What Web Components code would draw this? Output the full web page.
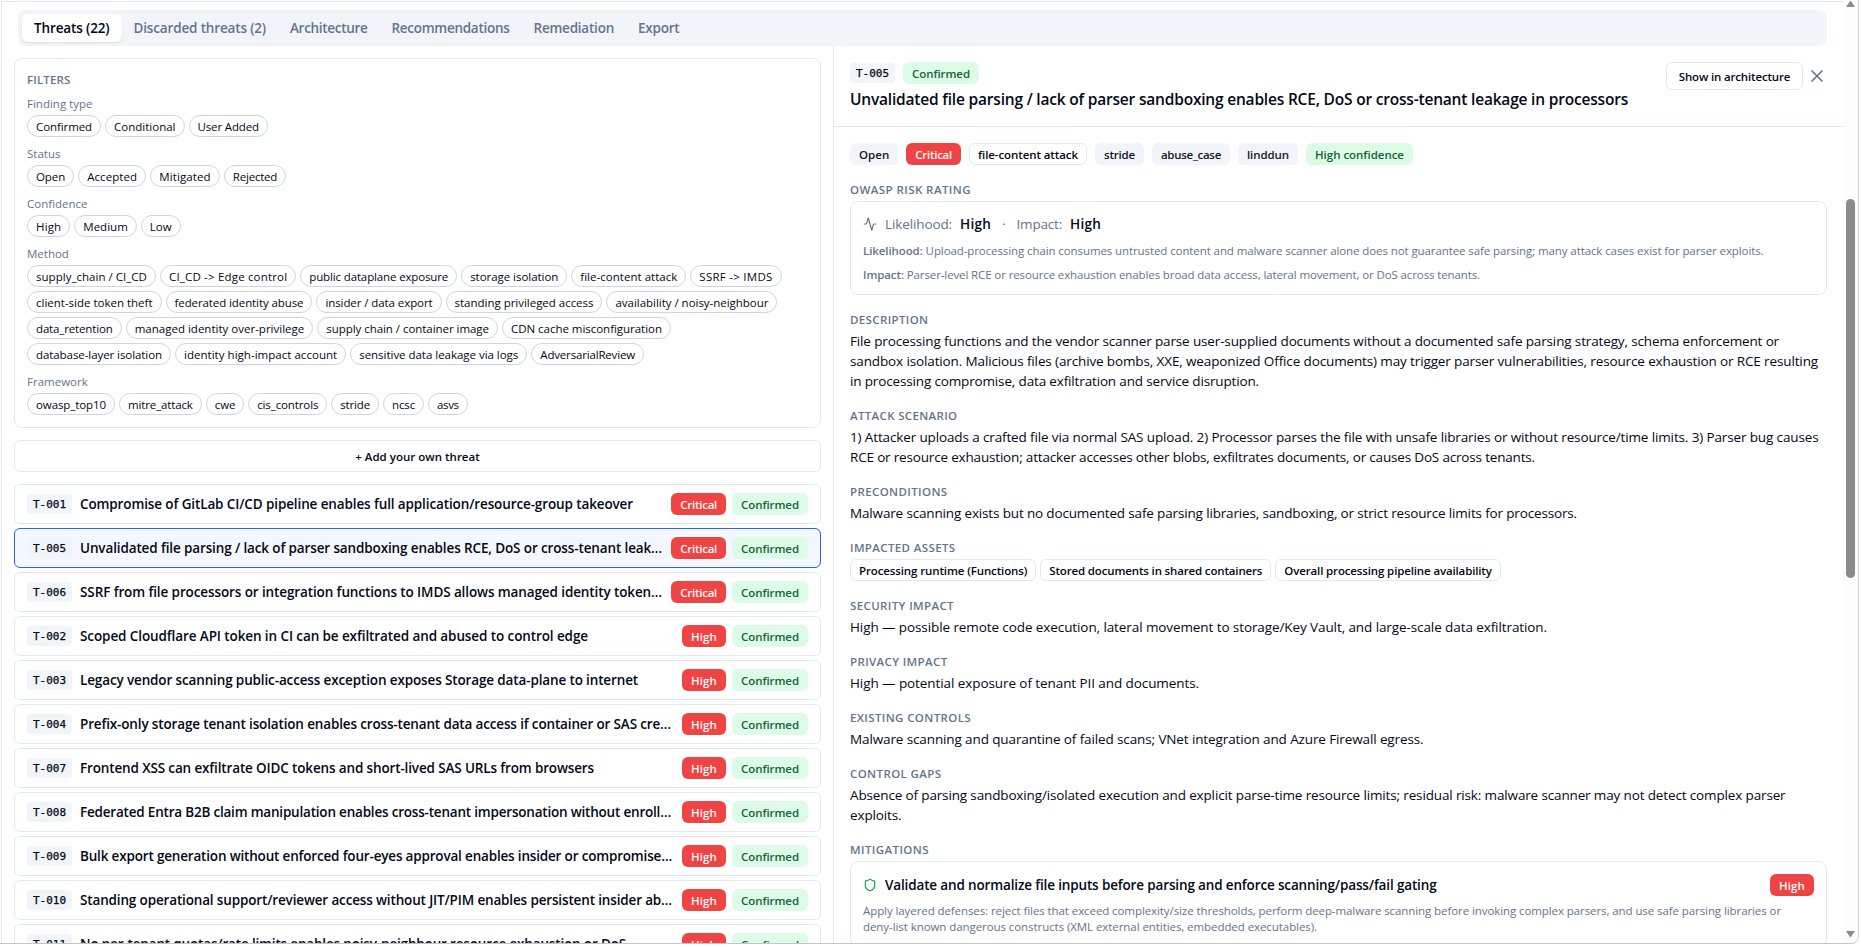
<!DOCTYPE html>
<html lang="en">
<head>
<meta charset="utf-8">
<title>Threat model</title>
<style>
  html, body { height: 100%; }
  body {
    margin: 0;
    overflow: hidden;
    background: #fff;
    color: #020817;
    font-family: "Open Sans", "Noto Sans", sans-serif;
    font-size: 13.5px;
    line-height: 20px;
  }
</style>
</head>
<body>
<threat-app></threat-app>

<script>
  const threats = [
    ['T-001', 'Compromise of GitLab CI/CD pipeline enables full application/resource-group takeover', 'Critical', 553],
    ['T-005', 'Unvalidated file parsing / lack of parser sandboxing enables RCE, DoS or cross-tenant leak…', 'Critical', 582],
    ['T-006', 'SSRF from file processors or integration functions to IMDS allows managed identity token…', 'Critical', 582],
    ['T-002', 'Scoped Cloudflare API token in CI can be exfiltrated and abused to control edge', 'High', 508],
    ['T-003', 'Legacy vendor scanning public-access exception exposes Storage data-plane to internet', 'High', 558],
    ['T-004', 'Prefix-only storage tenant isolation enables cross-tenant data access if container or SAS cre…', 'High', 591],
    ['T-007', 'Frontend XSS can exfiltrate OIDC tokens and short-lived SAS URLs from browsers', 'High', 514],
    ['T-008', 'Federated Entra B2B claim manipulation enables cross-tenant impersonation without enroll…', 'High', 591],
    ['T-009', 'Bulk export generation without enforced four-eyes approval enables insider or compromise…', 'High', 592],
    ['T-010', 'Standing operational support/reviewer access without JIT/PIM enables persistent insider ab…', 'High', 592],
    ['T-011', 'No per-tenant quotas/rate limits enables noisy-neighbour resource exhaustion or DoS', 'High', 546]
  ];

  const filters = [
    ['Finding type', [['Confirmed', 74], ['Conditional', 79.5], ['User Added', 79.5]]],
    ['Status', [['Open', 47.2], ['Accepted', 68], ['Mitigated', 69.6], ['Rejected', 62.4]]],
    ['Confidence', [['High', 43.3], ['Medium', 62.5], ['Low', 40]]],
    ['Method', [
      ['supply_chain / CI_CD', 129], ['CI_CD -> Edge control', 136.3], ['public dataplane exposure', 156.9],
      ['storage isolation', 106.1], ['file-content attack', 115.1], ['SSRF -> IMDS', 91.2],
      ['client-side token theft', 134.5], ['federated identity abuse', 146.9], ['insider / data export', 125.2],
      ['standing privileged access', 156.9], ['availability / noisy-neighbour', 171],
      ['data_retention', 94.7], ['managed identity over-privilege', 187.6], ['supply chain / container image', 180.7],
      ['CDN cache misconfiguration', 169],
      ['database-layer isolation', 144], ['identity high-impact account', 171.2],
      ['sensitive data leakage via logs', 177.1], ['AdversarialReview', 112.7]
    ]],
    ['Framework', [
      ['owasp_top10', 88], ['mitre_attack', 82.8], ['cwe', 38.4], ['cis_controls', 79.1],
      ['stride', 47.8], ['ncsc', 41], ['asvs', 39.5]
    ]]
  ];

  const esc = text => text.replace(/&/g, '&amp;').replace(/</g, '&lt;').replace(/>/g, '&gt;');

  // Text set to a given width by adjusting its tracking
  class FitText extends HTMLElement {
    constructor() {
      super();
      this.attachShadow({ mode: 'open' });
      this.shadowRoot.innerHTML = `
        <style>
          :host { display: inline-block; white-space: nowrap; }
          :host([line]) { display: block; width: max-content; }
        </style>
        <slot></slot>
      `;
    }

    connectedCallback() {
      const target = parseFloat(this.getAttribute('w'));
      if (!target) return;
      const natural = this.getBoundingClientRect().width;
      this.style.letterSpacing = `${(target - natural) / this.textContent.length}px`;
    }
  }

  class FilterChip extends HTMLElement {
    constructor() {
      super();
      this.attachShadow({ mode: 'open' });
    }

    connectedCallback() {
      const w = parseFloat(this.getAttribute('w'));
      this.shadowRoot.innerHTML = `
        <style>
          :host {
            box-sizing: border-box;
            display: flex;
            justify-content: center;
            width: ${w}px;
            height: 22px;
            padding: 2px 0;
            border: 1px solid #d1d5db;
            border-radius: 11px;
            font-size: 11.5px;
            line-height: 17px;
          }
        </style>
        <fit-text w="${w - 18}">${esc(this.getAttribute('label'))}</fit-text>
      `;
    }
  }

  class FilterPanel extends HTMLElement {
    constructor() {
      super();
      this.attachShadow({ mode: 'open' });
      this.shadowRoot.innerHTML = `
        <style>
          :host {
            box-sizing: border-box;
            display: flex;
            flex-direction: column;
            gap: 8px;
            padding: 12px;
            border: 1px solid #e2e8f0;
            border-radius: 8px;
            font-size: 11.5px;
            line-height: 18px;
            color: #64748b;
          }
          .title { height: 16px; font-weight: 600; }
          .group { display: flex; flex-direction: column; gap: 4px; }
          .name { height: 16px; }
          .chips { display: flex; flex-wrap: wrap; gap: 4px; color: #020817; }
        </style>
        <div class="title"><fit-text w="43.5">FILTERS</fit-text></div>
        ${filters.map(([name, chips]) => `
          <div class="group">
            <div class="name">${name}</div>
            <div class="chips">
              ${chips.map(([label, w]) => `<filter-chip label="${esc(label)}" w="${w}"></filter-chip>`).join('')}
            </div>
          </div>
        `).join('')}
      `;
    }
  }

  class ThreatBadge extends HTMLElement {
    constructor() {
      super();
      this.attachShadow({ mode: 'open' });
    }

    connectedCallback() {
      const w = parseFloat(this.getAttribute('w'));
      this.shadowRoot.innerHTML = `
        <style>
          :host {
            box-sizing: border-box;
            display: flex;
            flex: none;
            justify-content: center;
            width: ${w}px;
            height: 22px;
            padding: 2px 0;
            border: 1px solid transparent;
            border-radius: 6px;
            background: #f1f5f9;
            color: #0f172a;
            font-size: 11.5px;
            font-weight: 600;
            line-height: 17px;
          }
          :host([kind="danger"]) { background: #ef4444; color: #f8fafc; }
          :host([kind="success"]) { background: #dcfce7; color: #166534; }
          :host([kind="outline"]) { background: none; border-color: #e2e8f0; color: #020817; }
        </style>
        <fit-text w="${w - 18}">${esc(this.getAttribute('label'))}</fit-text>
      `;
    }
  }

  class ThreatId extends HTMLElement {
    constructor() {
      super();
      this.attachShadow({ mode: 'open' });
      this.shadowRoot.innerHTML = `
        <style>
          :host {
            display: block;
            flex: none;
            width: 45px;
            height: 20px;
            border-radius: 4px;
            background: #f1f5f9;
            font-family: "DejaVu Sans Mono", monospace;
            font-size: 11px;
            line-height: 21px;
            text-align: center;
            -webkit-text-stroke: .25px;
          }
        </style>
        <slot></slot>
      `;
    }
  }

  class ThreatRow extends HTMLElement {
    constructor() {
      super();
      this.attachShadow({ mode: 'open' });
    }

    connectedCallback() {
      const [id, title, severity, w] = threats[this.getAttribute('index')];
      this.shadowRoot.innerHTML = `
        <style>
          :host {
            box-sizing: border-box;
            display: flex;
            align-items: center;
            height: 40px;
            padding: 0 12px;
            border: 1px solid #e2e8f0;
            border-radius: 6px;
            background: #fff;
          }
          :host([selected]) { border-color: #2563eb; background: #f4f7fe; }
          .title { flex: 1; margin-left: 8px; font-weight: 600; }
          .badges { display: flex; gap: 6px; }
        </style>
        <threat-id>${id}</threat-id>
        <div class="title"><fit-text line w="${w}">${title}</fit-text></div>
        <div class="badges">
          <threat-badge kind="danger" label="${severity}" w="${severity === 'High' ? 44 : 54.7}"></threat-badge>
          <threat-badge kind="success" label="Confirmed" w="76"></threat-badge>
        </div>
      `;
    }
  }

  class ThreatList extends HTMLElement {
    constructor() {
      super();
      this.attachShadow({ mode: 'open' });
      this.shadowRoot.innerHTML = `
        <style>
          :host { display: flex; flex-direction: column; gap: 12px; }
          button {
            height: 32px;
            padding: 2px 0 0;
            border: 1px solid #e2e8f0;
            border-radius: 6px;
            background: #fff;
            color: #020817;
            font: 600 11.5px/20px "Open Sans", "Noto Sans", sans-serif;
          }
          .rows { display: flex; flex-direction: column; gap: 4px; }
        </style>
        <filter-panel></filter-panel>
        <button><fit-text w="124.5">+ Add your own threat</fit-text></button>
        <div class="rows">
          ${threats.map((t, i) => `<threat-row index="${i}" ${t[0] === 'T-005' ? 'selected' : ''}></threat-row>`).join('')}
        </div>
      `;
    }
  }

  class DetailSection extends HTMLElement {
    constructor() {
      super();
      this.attachShadow({ mode: 'open' });
    }

    connectedCallback() {
      this.shadowRoot.innerHTML = `
        <style>
          :host { display: flex; flex-direction: column; gap: 4px; }
          .label { height: 16px; color: #64748b; font-size: 11.5px; font-weight: 600; line-height: 18px; }
        </style>
        <div class="label"><fit-text line w="${this.getAttribute('w')}">${this.getAttribute('label')}</fit-text></div>
        <div><slot></slot></div>
      `;
    }
  }

  class ThreatDetail extends HTMLElement {
    constructor() {
      super();
      this.attachShadow({ mode: 'open' });
      this.shadowRoot.innerHTML = `
        <style>
          :host { display: block; }
          svg { display: block; flex: none; fill: none; stroke: currentColor; stroke-width: 2; stroke-linecap: round; stroke-linejoin: round; }
          header {
            box-sizing: border-box;
            display: flex;
            justify-content: space-between;
            height: 81px;
            padding: 16px 16px 0;
            border-bottom: 1px solid #e2e8f0;
          }
          .ids { display: flex; align-items: center; gap: 8px; }
          h2 { margin: 4px 0 0; font-size: 15.5px; font-weight: 600; line-height: 23px; }
          .actions { display: flex; gap: 4px; height: 28px; align-items: center; color: #64748b; }
          button {
            box-sizing: border-box;
            width: 137px;
            height: 28px;
            padding: 2px 0 0;
            border: 1px solid #e2e8f0;
            border-radius: 6px;
            background: #fff;
            color: #020817;
            font: 600 11.5px/20px "Open Sans", "Noto Sans", sans-serif;
          }
          .body { display: flex; flex-direction: column; gap: 16px; padding: 16px; }
          .tags { display: flex; gap: 8px; }
          .assets { display: flex; gap: 4px; }
          .card { padding: 12px; border: 1px solid #e2e8f0; border-radius: 8px; }
          .rating { display: flex; align-items: center; color: #64748b; }
          .rating b { font-weight: 600; color: #020817; }
          .note { margin: 8px 0 -1px; padding-top: 1px; color: #64748b; font-size: 11.5px; line-height: 16px; }
          .note b { font-weight: 600; }
          .mitigation { display: flex; align-items: center; gap: 8px; font-weight: 600; }
          .mitigation svg { color: #16a34a; }
          .mitigation threat-badge { margin-left: auto; }
        </style>
        <header>
          <div>
            <div class="ids">
              <threat-id>T-005</threat-id>
              <threat-badge kind="success" label="Confirmed" w="76"></threat-badge>
            </div>
            <h2><fit-text line w="778">Unvalidated file parsing / lack of parser sandboxing enables RCE, DoS or cross-tenant leakage in processors</fit-text></h2>
          </div>
          <div class="actions">
            <button><fit-text w="111.5">Show in architecture</fit-text></button>
            <svg width="20" height="20" viewBox="0 0 24 24"><path d="M18 6 6 18M6 6l12 12"/></svg>
          </div>
        </header>
        <div class="body">
          <div class="tags">
            <threat-badge label="Open" w="48.3"></threat-badge>
            <threat-badge kind="danger" label="Critical" w="54.7"></threat-badge>
            <threat-badge kind="outline" label="file-content attack" w="118"></threat-badge>
            <threat-badge label="stride" w="49"></threat-badge>
            <threat-badge label="abuse_case" w="78"></threat-badge>
            <threat-badge label="linddun" w="60"></threat-badge>
            <threat-badge kind="success" label="High confidence" w="107"></threat-badge>
          </div>
          <detail-section label="OWASP RISK RATING" w="121">
            <div class="card">
              <div class="rating">
                <svg width="14" height="14" viewBox="0 0 24 24"><path d="M22 12h-2.48a2 2 0 0 0-1.93 1.46l-2.35 8.36a.25.25 0 0 1-.48 0L9.24 2.18a.25.25 0 0 0-.48 0l-2.35 8.36A2 2 0 0 1 4.49 12H2"/></svg>
                <fit-text w="67" style="margin-left: 8px">Likelihood:</fit-text>
                <b><fit-text w="31" style="margin-left: 8px">High</fit-text></b>
                <span style="margin: 0 11px 0 11px">·</span>
                <fit-text w="45.5">Impact:</fit-text>
                <b><fit-text w="31" style="margin-left: 8px">High</fit-text></b>
              </div>
              <div class="note"><fit-text line w="900.5"><b>Likelihood:</b> Upload-processing chain consumes untrusted content and malware scanner alone does not guarantee safe parsing; many attack cases exist for parser exploits.</fit-text></div>
              <div class="note"><fit-text line w="617"><b>Impact:</b> Parser-level RCE or resource exhaustion enables broad data access, lateral movement, or DoS across tenants.</fit-text></div>
            </div>
          </detail-section>
          <detail-section label="DESCRIPTION" w="78.5">
            <fit-text line w="929">File processing functions and the vendor scanner parse user-supplied documents without a documented safe parsing strategy, schema enforcement or</fit-text>
            <fit-text line w="968">sandbox isolation. Malicious files (archive bombs, XXE, weaponized Office documents) may trigger parser vulnerabilities, resource exhaustion or RCE resulting</fit-text>
            <fit-text line w="409">in processing compromise, data exfiltration and service disruption.</fit-text>
          </detail-section>
          <detail-section label="ATTACK SCENARIO" w="107.5">
            <fit-text line w="968.5">1) Attacker uploads a crafted file via normal SAS upload. 2) Processor parses the file with unsafe libraries or without resource/time limits. 3) Parser bug causes</fit-text>
            <fit-text line w="685">RCE or resource exhaustion; attacker accesses other blobs, exfiltrates documents, or causes DoS across tenants.</fit-text>
          </detail-section>
          <detail-section label="PRECONDITIONS" w="97.5">
            <fit-text line w="727">Malware scanning exists but no documented safe parsing libraries, sandboxing, or strict resource limits for processors.</fit-text>
          </detail-section>
          <detail-section label="IMPACTED ASSETS" w="105.5">
            <div class="assets">
              <threat-badge kind="outline" label="Processing runtime (Functions)" w="186.3"></threat-badge>
              <threat-badge kind="outline" label="Stored documents in shared containers" w="231"></threat-badge>
              <threat-badge kind="outline" label="Overall processing pipeline availability" w="225.5"></threat-badge>
            </div>
          </detail-section>
          <detail-section label="SECURITY IMPACT" w="104">
            <fit-text line w="697">High — possible remote code execution, lateral movement to storage/Key Vault, and large-scale data exfiltration.</fit-text>
          </detail-section>
          <detail-section label="PRIVACY IMPACT" w="97.5">
            <fit-text line w="349">High — potential exposure of tenant PII and documents.</fit-text>
          </detail-section>
          <detail-section label="EXISTING CONTROLS" w="121">
            <fit-text line w="573.5">Malware scanning and quarantine of failed scans; VNet integration and Azure Firewall egress.</fit-text>
          </detail-section>
          <detail-section label="CONTROL GAPS" w="91.5">
            <fit-text line w="935.5">Absence of parsing sandboxing/isolated execution and explicit parse-time resource limits; residual risk: malware scanner may not detect complex parser</fit-text>
            <fit-text line w="51.5">exploits.</fit-text>
          </detail-section>
          <detail-section label="MITIGATIONS" w="79">
            <div class="card">
              <div class="mitigation">
                <svg width="14" height="14" viewBox="0 0 24 24"><path d="M20 13c0 5-3.5 7.5-7.66 8.95a1 1 0 0 1-.67-.01C7.5 20.5 4 18 4 13V6a1 1 0 0 1 1-1c2 0 4.5-1.2 6.24-2.72a1.17 1.17 0 0 1 1.52 0C14.51 3.81 17 5 19 5a1 1 0 0 1 1 1z"/></svg>
                <fit-text w="551.5">Validate and normalize file inputs before parsing and enforce scanning/pass/fail gating</fit-text>
                <threat-badge kind="danger" label="High" w="44"></threat-badge>
              </div>
              <div class="note" style="margin-top: 6px">
                <fit-text line w="918">Apply layered defenses: reject files that exceed complexity/size thresholds, perform deep-malware scanning before invoking complex parsers, and use safe parsing libraries or</fit-text>
                <fit-text line w="454">deny-list known dangerous constructs (XML external entities, embedded executables).</fit-text>
              </div>
            </div>
          </detail-section>
        </div>
      `;
    }
  }

  class TabBar extends HTMLElement {
    constructor() {
      super();
      this.attachShadow({ mode: 'open' });
      this.shadowRoot.innerHTML = `
        <style>
          :host {
            box-sizing: border-box;
            display: flex;
            height: 36px;
            padding: 4px;
            border-radius: 8px;
            background: #f1f5f9;
            color: #64748b;
            font-weight: 600;
          }
          .tab { padding: 4px 12px; border-radius: 6px; }
          .active { background: #fff; color: #020817; box-shadow: 0 1px 2px rgba(0, 0, 0, .1); }
        </style>
        <div class="tab active"><fit-text w="75.5">Threats (22)</fit-text></div>
        <div class="tab"><fit-text w="132.5">Discarded threats (2)</fit-text></div>
        <div class="tab"><fit-text w="77.5">Architecture</fit-text></div>
        <div class="tab"><fit-text w="118">Recommendations</fit-text></div>
        <div class="tab"><fit-text w="80.5">Remediation</fit-text></div>
        <div class="tab"><fit-text w="41.5">Export</fit-text></div>
      `;
    }
  }

  class PageScrollbar extends HTMLElement {
    constructor() {
      super();
      this.attachShadow({ mode: 'open' });
      this.shadowRoot.innerHTML = `
        <style>
          :host {
            box-sizing: border-box;
            display: flex;
            flex-direction: column;
            align-items: center;
            width: 15px;
            padding-bottom: 5px;
            background: #fcfcfc;
          }
          svg { fill: #8b8b8b; }
          .thumb { width: 9px; height: 379px; margin: 192px 0 auto; border-radius: 5px; background: #8b8b8b; }
        </style>
        <svg width="9" height="7" viewBox="0 0 9 7"><path d="M4.5 .5 8.6 6.2Q8.7 7 8 7H1Q.3 7 .4 6.2z"/></svg>
        <div class="thumb"></div>
        <svg width="9" height="7" viewBox="0 0 9 7"><path d="M4.5 6.5 8.6.8Q8.7 0 8 0H1Q.3 0 .4.8z"/></svg>
      `;
    }
  }

  class ThreatApp extends HTMLElement {
    constructor() {
      super();
      this.attachShadow({ mode: 'open' });
      this.shadowRoot.innerHTML = `
        <style>
          :host {
            box-sizing: border-box;
            display: flex;
            width: 1859px;
            height: 944px;
            overflow: hidden;
            border-right: 1px solid #d0d0d3;
            border-bottom: 1px solid #c4c4c7;
            border-bottom-right-radius: 8px;
          }
          main {
            box-sizing: border-box;
            flex: 1;
            height: 960px;
            margin: 1px 0 0 1px;
            border: 1px solid #e2e8f0;
            border-right: 0;
          }
          tab-bar { margin: 8px 16px 0; }
          .columns { display: flex; }
          threat-list { width: 807px; padding: 12px; }
          threat-detail { flex: 1; border-left: 1px solid #e2e8f0; }
          page-scrollbar { height: 943px; }
        </style>
        <main>
          <tab-bar></tab-bar>
          <div class="columns">
            <threat-list></threat-list>
            <threat-detail></threat-detail>
          </div>
        </main>
        <page-scrollbar></page-scrollbar>
      `;
    }
  }

  customElements.define('threat-app', ThreatApp);
  customElements.define('tab-bar', TabBar);
  customElements.define('threat-list', ThreatList);
  customElements.define('filter-panel', FilterPanel);
  customElements.define('filter-chip', FilterChip);
  customElements.define('threat-row', ThreatRow);
  customElements.define('threat-detail', ThreatDetail);
  customElements.define('detail-section', DetailSection);
  customElements.define('threat-id', ThreatId);
  customElements.define('threat-badge', ThreatBadge);
  customElements.define('page-scrollbar', PageScrollbar);
  // Last, so every font style is in place before measuring
  customElements.define('fit-text', FitText);
</script>
</body>
</html>
